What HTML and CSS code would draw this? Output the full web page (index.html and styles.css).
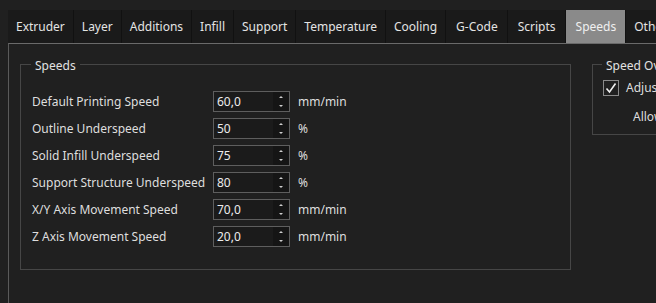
FILE: index.html
```html
<!DOCTYPE html>
<html>
<head>
<meta charset="utf-8">
<link rel="stylesheet" href="styles.css">
</head>
<body>
<div class="tabbar">
  <div class="tab">Extruder</div>
  <div class="tab">Layer</div>
  <div class="tab">Additions</div>
  <div class="tab">Infill</div>
  <div class="tab">Support</div>
  <div class="tab">Temperature</div>
  <div class="tab">Cooling</div>
  <div class="tab wide">G-Code</div>
  <div class="tab wide">Scripts</div>
  <div class="tab wide active">Speeds</div>
  <div class="tab">Other</div>
</div>
<div class="pane">
  <fieldset class="group speeds">
    <legend>Speeds</legend>
    <div class="grid">
      <div class="label">Default Printing Speed</div>
      <div class="spin"><span class="val">60,0</span><span class="arrows"><span class="up"></span><span class="down"></span></span></div>
      <div class="unit">mm/min</div>

      <div class="label">Outline Underspeed</div>
      <div class="spin"><span class="val">50</span><span class="arrows"><span class="up"></span><span class="down"></span></span></div>
      <div class="unit">%</div>

      <div class="label">Solid Infill Underspeed</div>
      <div class="spin"><span class="val">75</span><span class="arrows"><span class="up"></span><span class="down"></span></span></div>
      <div class="unit">%</div>

      <div class="label">Support Structure Underspeed</div>
      <div class="spin"><span class="val">80</span><span class="arrows"><span class="up"></span><span class="down"></span></span></div>
      <div class="unit">%</div>

      <div class="label">X/Y Axis Movement Speed</div>
      <div class="spin"><span class="val">70,0</span><span class="arrows"><span class="up"></span><span class="down"></span></span></div>
      <div class="unit">mm/min</div>

      <div class="label">Z Axis Movement Speed</div>
      <div class="spin"><span class="val">20,0</span><span class="arrows"><span class="up"></span><span class="down"></span></span></div>
      <div class="unit">mm/min</div>
    </div>
  </fieldset>
  <fieldset class="group overrides">
    <legend>Speed Override</legend>
    <div class="check-row">
      <span class="checkbox"><svg width="14" height="14" viewBox="0 0 14 14"><path d="M2.5 7.5 L5.5 11 L11.5 2.5" fill="none" stroke="#f0f0f0" stroke-width="1.6"/></svg></span>
      <span class="check-label">Adjust printing speed</span>
    </div>
    <div class="sub-row">Allow speeding up</div>
  </fieldset>
</div>
</body>
</html>
```

FILE: styles.css
```css
html, body {
  margin: 0;
  padding: 0;
  background: #202020;
  overflow: hidden;
  width: 656px;
  height: 303px;
}
body {
  font-family: "Noto Sans", "Open Sans", sans-serif;
  font-size: 12px;
  color: #dedede;
}
.tabbar {
  display: flex;
  padding: 10px 0 0 8px;
  white-space: nowrap;
  overflow: hidden;
}
.tab {
  flex: none;
  height: 33px;
  line-height: 34px;
  padding: 0 8px;
  background: #1a1a1a;
  border-right: 1px solid #111;
  color: #e4e4e4;
}
.tab.wide {
  padding: 0 9px 0 10px;
}
.tab.active {
  background: #8a8a8a;
  color: #f0f0f0;
}
.pane {
  margin-left: 8px;
  border-top: 1px solid #6a6a6a;
  border-left: 1px solid #5a5a5a;
  height: 260px;
  display: flex;
  align-items: flex-start;
  gap: 21px;
  padding: 11px 0 0 11px;
  overflow: hidden;
}
.group {
  margin: 0;
  border: 1px solid #464646;
  padding: 0;
  box-sizing: border-box;
}
.group legend {
  padding: 3px 4px 0;
  margin-left: -1px;
  color: #e2e2e2;
  line-height: 16px;
}
.speeds {
  flex: none;
  width: 551px;
  height: 215px;
  padding: 17px 0 0 11px;
}
.grid {
  display: grid;
  grid-template-columns: 181px 77px auto;
  grid-auto-rows: 21px;
  row-gap: 6px;
  align-items: center;
}
.label {
  white-space: nowrap;
}
.spin {
  box-sizing: border-box;
  height: 21px;
  border: 1px solid #5e5e5e;
  background: #1b1b1b;
  display: flex;
  align-items: center;
  justify-content: space-between;
}
.val {
  padding-left: 3px;
  color: #ececec;
}
.arrows {
  width: 16px;
  height: 19px;
  background: #151515;
  display: flex;
  flex-direction: column;
  align-items: center;
  justify-content: space-around;
}
.up, .down {
  width: 0;
  height: 0;
  border-left: 2px solid transparent;
  border-right: 2px solid transparent;
}
.up { border-bottom: 2px solid #cfcfcf; }
.down { border-top: 2px solid #cfcfcf; }
.unit {
  padding-left: 8px;
}
.overrides {
  flex: none;
  width: 120px;
  height: 80px;
  padding: 5px 0 0 10px;
}
.check-row {
  display: flex;
  align-items: center;
  gap: 7px;
  white-space: nowrap;
}
.checkbox {
  box-sizing: border-box;
  width: 16px;
  height: 16px;
  border: 1px solid #8a8a8a;
  display: flex;
  align-items: center;
  justify-content: center;
}
.sub-row {
  padding: 12px 0 0 30px;
  white-space: nowrap;
}
```
